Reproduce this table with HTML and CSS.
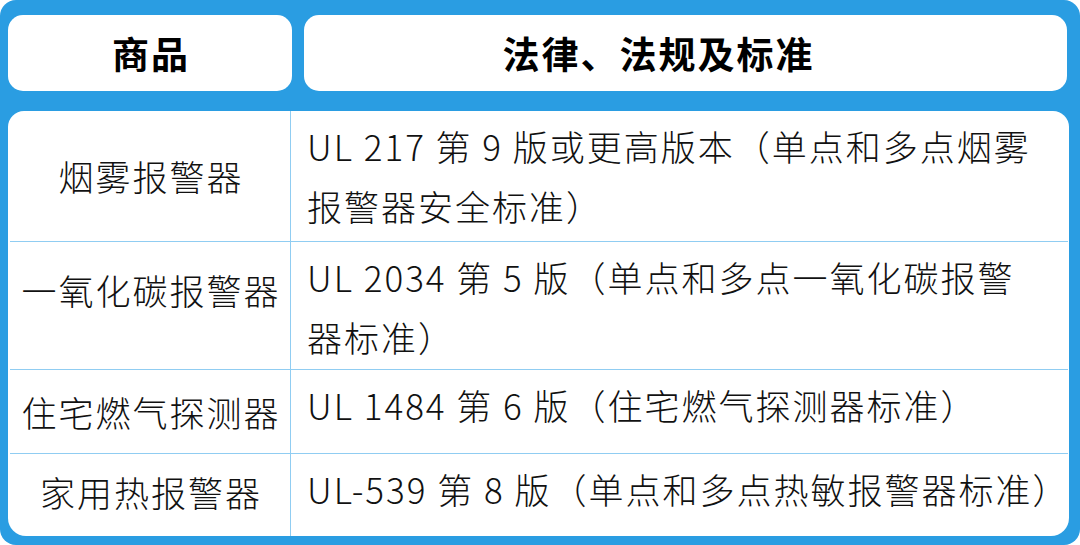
FILE: index.html
```html
<!DOCTYPE html>
<html lang="zh-CN">
<head>
<meta charset="utf-8">
<title>商品与标准</title>
<link rel="stylesheet" href="styles.css">
</head>
<body>
<div class="frame">
  <div class="head">
    <div class="pill pill-left">商品</div>
    <div class="pill pill-right">法律、法规及标准</div>
  </div>
  <div class="table">
    <div class="row row-1">
      <div class="cell name">烟雾报警器</div>
      <div class="cell std">UL 217 第 9 版或更高版本（单点和多点烟雾<br>报警器安全标准）</div>
    </div>
    <div class="row row-2">
      <div class="cell name name-up">一氧化碳报警器</div>
      <div class="cell std">UL 2034 第 5 版（单点和多点一氧化碳报警<br>器标准）</div>
    </div>
    <div class="row row-3">
      <div class="cell name">住宅燃气探测器</div>
      <div class="cell std">UL 1484 第 6 版（住宅燃气探测器标准）</div>
    </div>
    <div class="row row-4">
      <div class="cell name name-up-sm">家用热报警器</div>
      <div class="cell std">UL-539 第 8 版（单点和多点热敏报警器标准）</div>
    </div>
  </div>
</div>
</body>
</html>
```

FILE: styles.css
```css
html, body {
  margin: 0;
  padding: 0;
  background: #ffffff;
}

body {
  width: 1080px;
  height: 545px;
  overflow: hidden;
  font-family: "Noto Sans CJK SC", "Noto Sans", sans-serif;
}

.frame {
  box-sizing: border-box;
  width: 1080px;
  height: 545px;
  background: #2a9de2;
  border-radius: 16px;
  padding: 15px 13px 9px 8px;
  display: flex;
  flex-direction: column;
  gap: 20px;
}

.head {
  display: flex;
  gap: 12px;
  height: 76px;
}

.pill {
  background: #ffffff;
  border-radius: 15px;
  display: flex;
  align-items: center;
  justify-content: center;
  font-weight: 700;
  font-size: 37px;
  letter-spacing: 2px;
  color: #000000;
}

.pill-left {
  width: 282px;
  flex: none;
  padding-left: 2px;
}

.pill-right {
  flex: 1;
  padding-right: 54px;
}

.table {
  flex: 1;
  background: #ffffff;
  border-radius: 16px 16px 18px 18px;
  display: flex;
  flex-direction: column;
  overflow: hidden;
  margin-right: -2px;
}

.row {
  display: flex;
  box-sizing: border-box;
  border-bottom: 1.5px solid #90cdf2;
  margin: 0 1px 0 2px;
}

.row-1 { height: 131px; }
.row-2 { height: 128px; }
.row-3 { height: 84px; }
.row-4 { height: 82px; border-bottom: none; }

.cell {
  box-sizing: border-box;
  line-height: 60px;
  color: #111111;
  font-size: 35px;
  font-weight: 300;
  letter-spacing: 2px;
  white-space: nowrap;
}

.name {
  width: 281px;
  flex: none;
  border-right: 1.5px solid #90cdf2;
  display: flex;
  align-items: center;
  justify-content: center;
  padding-left: 2px;
}

.name-up {
  padding-bottom: 32px;
}

.name-up-sm {
  padding-bottom: 6px;
}

.std {
  flex: 1;
  padding: 5px 0 0 16px;
}
```
